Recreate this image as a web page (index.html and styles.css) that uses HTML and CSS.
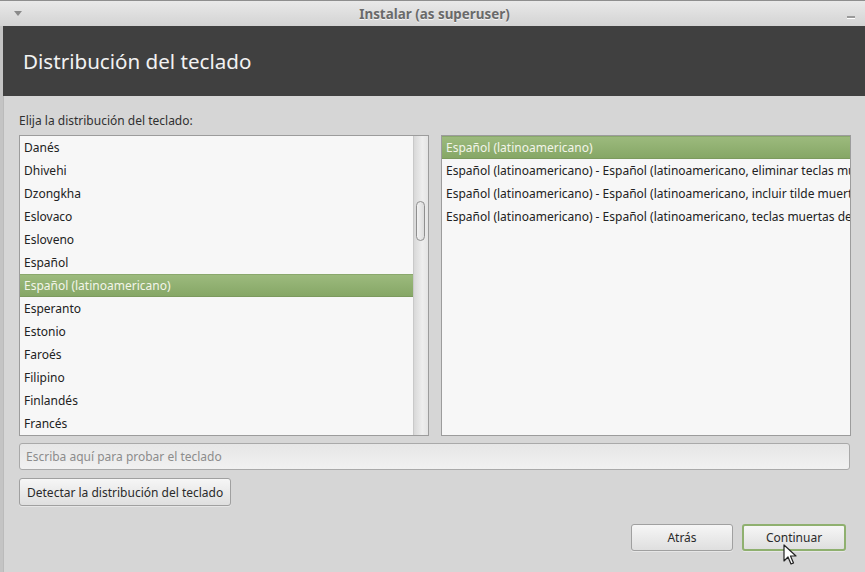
FILE: index.html
```html
<!DOCTYPE html>
<html>
<head>
	<meta charset="UTF-8">
	<title>Instalar (as superuser)</title>
	<link rel="stylesheet" href="styles.css">
</head>
<body>
	<div class="win">
		<div class="ttlbar">
			<span class="menuarr"></span>
			<span class="ttltxt">Instalar (as superuser)</span>
			<span class="minbtn"></span>
		</div>
		<div class="frame">
			<div class="hdr">Distribución del teclado</div>
			<div class="cnt">
				<div class="lbl">Elija la distribución del teclado:</div>
				<div class="lists">
					<div class="lst lft">
						<div class="rows">
							<div class="row">Danés</div>
							<div class="row">Dhivehi</div>
							<div class="row">Dzongkha</div>
							<div class="row">Eslovaco</div>
							<div class="row">Esloveno</div>
							<div class="row">Español</div>
							<div class="row sel">Español (latinoamericano)</div>
							<div class="row">Esperanto</div>
							<div class="row">Estonio</div>
							<div class="row">Faroés</div>
							<div class="row">Filipino</div>
							<div class="row">Finlandés</div>
							<div class="row">Francés</div>
						</div>
						<div class="sbar"><div class="thumb"></div></div>
					</div>
					<div class="lst rgt">
						<div class="rows">
							<div class="row sel">Español (latinoamericano)</div>
							<div class="row">Español (latinoamericano) - Español (latinoamericano, eliminar teclas muertas)</div>
							<div class="row">Español (latinoamericano) - Español (latinoamericano, incluir tilde muerta)</div>
							<div class="row">Español (latinoamericano) - Español (latinoamericano, teclas muertas de Sun)</div>
						</div>
					</div>
				</div>
				<input class="tst" placeholder="Escriba aquí para probar el teclado">
				<div class="detrow"><button class="btn det">Detectar la distribución del teclado</button></div>
				<div class="foot">
					<button class="btn nav">Atrás</button>
					<button class="btn nav dflt">Continuar</button>
				</div>
			</div>
		</div>
	</div>
	<svg class="cursor" width="14" height="22" viewBox="0 0 14 22">
		<path d="M1 1 L1 17 L5 13 L8 20 L10.5 19 L7.5 12 L13 12 Z" fill="#fff" stroke="#222" stroke-width="1.2" stroke-linejoin="round"/>
	</svg>
</body>
</html>
```

FILE: styles.css
```css
html, body { margin: 0; padding: 0; }
body { width: 865px; height: 572px; overflow: hidden; background: #d6d6d6; color: #2e2e2e;
	font-family: "Noto Sans", "Open Sans", sans-serif; font-size: 12px; position: relative; }
.win { display: flex; flex-direction: column; height: 572px; }
.ttlbar { height: 25px; border-top: 1px solid #8e8e8e; background: linear-gradient(#e9e9e9, #d3d3d3);
	display: flex; align-items: center; justify-content: center; position: relative; }
.ttltxt { font-weight: bold; font-size: 13.4px; color: #6a6a6a; text-shadow: 0 1px 0 #f4f4f4; margin-left: 4px; }
.menuarr { position: absolute; left: 14px; top: 10px; width: 0; height: 0;
	border-left: 4px solid transparent; border-right: 4px solid transparent; border-top: 5px solid #8a8a8a; }
.minbtn { position: absolute; right: 10px; top: 15px; width: 8px; height: 2px; background: #9a9a9a; border-bottom: 1px solid #fff; }
.frame { flex: 1; display: flex; flex-direction: column; border-left: 3px solid #c4c4c4; box-shadow: inset 1px 0 0 #bbb; }
.hdr { height: 70px; background: #404040; color: #f2f2f2; font-size: 20.6px; padding-left: 20px;
	display: flex; align-items: center; }
.cnt { flex: 1; padding: 16px 14px 0 16px; display: flex; flex-direction: column; }
.lbl { line-height: 17px; height: 17px; color: #303030; }
.lists { display: flex; gap: 12px; margin-top: 6px; height: 301px; }
.lst { flex: 0 0 408px; border: 1px solid #9c9c9c; background: #f7f7f7; display: flex; overflow: hidden; }
.lst .rows { flex: 1; min-width: 0; }
.row { height: 23px; line-height: 23px; padding-left: 4px; white-space: nowrap; overflow: hidden; color: #222; }
.row.sel { background: linear-gradient(#9cba7d, #86a766); color: #f3f5ea; border-top: 1px solid #8aa86c; border-bottom: 1px solid #7c9a5e;
	height: 21px; line-height: 21px; }
.sbar { width: 14px; border-left: 1px solid #c9c9c9; background: linear-gradient(90deg, #d8d8d8, #eeeeee 60%, #e4e4e4); position: relative; }
.thumb { position: absolute; left: 2px; top: 65px; width: 7px; height: 38px; border: 1px solid #8f8f8f; border-radius: 5px;
	background: linear-gradient(90deg, #f2f2f2, #dcdcdc); }
.tst { margin-top: 7px; width: 831px; height: 27px; box-sizing: border-box; border: 1px solid #a9a9a9; border-radius: 3px;
	background: linear-gradient(#e6e6e6, #f1f1f1); font: inherit; padding: 0 0 0 6px; color: #333; }
.tst::placeholder { color: #8c8c8c; }
.detrow { margin-top: 8px; }
.btn { font: inherit; color: #2a2a2a; border: 1px solid #a0a0a0; border-radius: 3px;
	background: linear-gradient(#f6f6f6, #dfdfdf); box-shadow: 0 1px 0 rgba(255,255,255,0.4); padding: 0; }
.det { height: 28px; padding: 0 7px; }
.foot { display: flex; justify-content: flex-end; gap: 9px; margin-top: 18px; padding-right: 5px; }
.nav { width: 102px; height: 27px; }
.nav.dflt { width: 104px; border: 2px solid #8fb06f; }
.cursor { position: absolute; left: 783px; top: 544px; }
```
